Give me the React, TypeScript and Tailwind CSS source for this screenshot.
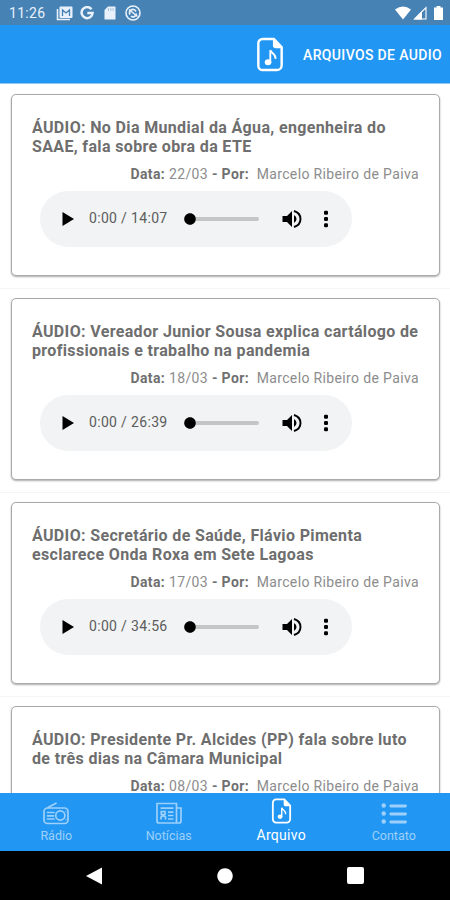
import { FaCircle } from "react-icons/fa";

type Audio = {
  title: string[];
  date: string;
  author: string;
  duration: string;
};

const audios: Audio[] = [
  {
    title: ["ÁUDIO: No Dia Mundial da Água, engenheira do", "SAAE, fala sobre obra da ETE"],
    date: "22/03",
    author: "Marcelo Ribeiro de Paiva",
    duration: "14:07",
  },
  {
    title: ["ÁUDIO: Vereador Junior Sousa explica cartálogo de", "profissionais e trabalho na pandemia"],
    date: "18/03",
    author: "Marcelo Ribeiro de Paiva",
    duration: "26:39",
  },
  {
    title: ["ÁUDIO: Secretário de Saúde, Flávio Pimenta", "esclarece Onda Roxa em Sete Lagoas"],
    date: "17/03",
    author: "Marcelo Ribeiro de Paiva",
    duration: "34:56",
  },
  {
    title: ["ÁUDIO: Presidente Pr. Alcides (PP) fala sobre luto", "de três dias na Câmara Municipal"],
    date: "08/03",
    author: "Marcelo Ribeiro de Paiva",
    duration: "",
  },
];

const MusicFileIcon = ({ className }: { className?: string }) => (
  <svg viewBox="0 0 28 36" fill="none" className={className}>
    <path
      d="M6.500 2H18l8 8.500V29a5 5 0 0 1-5 5H6.500A4.500 4.500 0 0 1 2 29.500V6.500A4.500 4.500 0 0 1 6.500 2Z"
      stroke="currentColor"
      strokeWidth="2.500"
    />
    <path d="M17 1.500 27 11.500H20a3 3 0 0 1-3-3Z" fill="currentColor" />
    <ellipse cx="12" cy="26" rx="3.400" ry="3" fill="currentColor" />
    <path d="M14.300 26V13.500c1 3.500 6 3.700 5.400 9" stroke="currentColor" strokeWidth="1.900" />
  </svg>
);

const RadioIcon = () => (
  <svg viewBox="0 0 26 23" fill="none" stroke="currentColor" strokeWidth="1.700" className="h-[23px] w-[26px]">
    <rect x="1" y="6" width="24" height="15.500" rx="3.500" />
    <path d="M5 5.500 13 1.200M4.500 10.500H11M4.500 13.800H10.500M4.500 17H11" strokeLinecap="round" />
    <circle cx="17.300" cy="13.500" r="4.600" />
    <path d="M22.500 9.500h.8M22.500 17.500h.8" />
  </svg>
);

const NewsIcon = () => (
  <svg viewBox="0 0 26 23" fill="none" stroke="currentColor" strokeWidth="1.700" className="h-[23px] w-[26px]">
    <path d="M1 1.500H20.500V21H3a2 2 0 0 1-2-2ZM20.500 6H25V19a2 2 0 0 1-2 2H19" />
    <path d="M4.500 6.200H17.500M12 10.200H17.500M12 13.500H17.500M12 17H17.500" />
    <path d="M5 17.500V15l2-1.500 2.500 1.500v2.500M5.300 9.500H9v3H5.300Z" />
  </svg>
);

const ListIcon = () => (
  <svg viewBox="0 0 26 23" fill="none" stroke="currentColor" className="h-[23px] w-[26px]">
    <path d="M9.800 4H24.500M9.800 12H24.500M9.800 20H24.500" strokeWidth="2.800" strokeLinecap="round" />
    <path d="M2.700 3.500h.01M2.700 11.500h.01M2.700 19.500h.01" strokeWidth="4.500" strokeLinecap="round" />
  </svg>
);

const StatusBar = () => (
  <div className="flex h-[25px] shrink-0 items-center bg-[#4682b4] pt-px pr-[7px] pl-[9px] text-[#e8f1fc]">
    <span className="w-[47px] text-[14px] tracking-[0.300px]">11:26</span>
    <svg viewBox="0 0 17 15" fill="none" className="h-[15px] w-[17px]">
      <path d="M1.500 3v10.500H14" stroke="currentColor" strokeWidth="1.600" />
      <rect x="3.500" y="0.500" width="13" height="11.500" rx="1" fill="currentColor" />
      <path d="M6.500 10V4l3.500 3 3.500-3v6" stroke="#4682b4" strokeWidth="1.300" />
    </svg>
    <svg viewBox="0 0 14 14" fill="none" className="ml-[7px] h-[14px] w-[14px]">
      <path d="M11.500 3.300A5.500 5.500 0 1 0 12.600 7H7.300" stroke="currentColor" strokeWidth="2.500" />
    </svg>
    <svg viewBox="0 0 12 14" fill="none" className="ml-[10px] h-[14px] w-[12px]">
      <path d="M4 .5h7.500v13H.5V4Z" fill="currentColor" />
      <path d="M4.500 2v3M6.800 2v3M9.100 2v3" stroke="#4682b4" strokeWidth="0.400" />
    </svg>
    <svg viewBox="0 0 16 16" fill="none" stroke="currentColor" className="ml-[9px] h-[16px] w-[16px]">
      <circle cx="8" cy="8" r="7" strokeWidth="1.600" />
      <path d="M5 9.500a3.600 3.600 0 0 1 .8-4.400q3-2 5.200 1.400M11.500 8.500a3.600 3.600 0 0 1-5.500 2.800" strokeWidth="1.700" />
      <path d="m4 4.500 8.500 7" strokeWidth="1.500" />
    </svg>
    <div className="ml-auto flex items-center gap-[2px] text-white">
      <svg viewBox="0 0 16 14" fill="currentColor" className="h-[14px] w-[16px]">
        <path d="M0 3.500Q8-2.500 16 3.500L8 13.500Z" />
      </svg>
      <svg viewBox="0 0 14 14" fill="none" className="h-[14px] w-[14px]">
        <path d="M13 1.500V13H1.500Z" stroke="currentColor" strokeWidth="1.100" />
        <path d="M9 5v8.500H1Z" fill="currentColor" />
      </svg>
      <svg viewBox="0 0 9 14" fill="currentColor" className="ml-[5px] h-[14px] w-[9px]">
        <path d="M2.500 0h4v1.500H9V14H0V1.500h2.500Z" />
      </svg>
    </div>
  </div>
);

const Player = ({ duration }: { duration: string }) => (
  <div className="mt-2 ml-[28px] flex h-14 w-[312px] items-center rounded-full bg-[#f1f3f4] pl-[22px] text-black">
    <svg viewBox="0 0 12 14" fill="currentColor" className="h-[14px] w-[12px]">
      <path d="M.5 0v14L12 7Z" />
    </svg>
    <span className="ml-[15px] w-[95px] text-[14px] tracking-[0.330px] whitespace-nowrap text-[#5c5c5c]">
      0:00 / {duration}
    </span>
    <FaCircle className="h-3 w-3 shrink-0" />
    <div className="h-1 w-[63px] rounded-r-full bg-[#c4c5c5]" />
    <svg viewBox="0 0 20 18" fill="none" className="ml-[23px] h-[18px] w-[20px]">
      <path d="M.5 6v6H5l5 5V1L5 6Z" fill="currentColor" />
      <path d="M12 5v8q2.500-1.500 2.500-4T12 5Z" fill="currentColor" />
      <path d="M12 1q6.500 2 6.500 8T12 17" stroke="currentColor" strokeWidth="1.900" />
    </svg>
    <svg viewBox="0 0 4 18" fill="currentColor" className="ml-[22px] h-[18px] w-[4px]">
      <rect y="0.700" width="4" height="4" rx="1.300" />
      <rect y="7" width="4" height="4" rx="1.300" />
      <rect y="13.300" width="4" height="4" rx="1.300" />
    </svg>
  </div>
);

const AudioCard = ({ audio }: { audio: Audio }) => (
  <li className="h-[204px] shrink-0 border-b border-[#f5f5f7] pt-[9px] pr-[10px] pl-[11px]">
    <article className="h-[182px] rounded-[5px] border border-[#aaa] bg-white shadow-[0_1px_2px_#00000055]">
      <h2 className="pt-[22.500px] pl-[20px] text-[16px] leading-[19.500px] font-bold tracking-[0.350px] whitespace-nowrap text-[#6e6e6e]">
        {audio.title.map((line) => (
          <span key={line} className="block">
            {line}
          </span>
        ))}
      </h2>
      <p className="mt-[8px] pr-[20px] text-right text-[14px] leading-[18px] tracking-[0.360px] text-[#8c8c8c]">
        <b className="text-[#707070]">Data:</b> {audio.date} <b className="text-[#707070]">- Por:</b>
        &nbsp; {audio.author}
      </p>
      {audio.duration && <Player duration={audio.duration} />}
    </article>
  </li>
);

const tabs = [
  { label: "Rádio", icon: <RadioIcon /> },
  { label: "Notícias", icon: <NewsIcon /> },
  { label: "Arquivo", icon: <MusicFileIcon className="h-[26px] w-[21px]" />, active: true },
  { label: "Contato", icon: <ListIcon /> },
];

const TabBar = () => (
  <nav className="grid h-[58px] shrink-0 grid-cols-4 bg-[#2296f3]">
    {tabs.map(({ label, icon, active }) =>
      active ? (
        <div key={label} className="flex flex-col items-center pt-[5px] text-white">
          {icon}
          <span className="mt-[2px] text-[14px] leading-[18px] tracking-[0.300px]">{label}</span>
        </div>
      ) : (
        <div key={label} className="flex flex-col items-center pt-[9px] text-[#9dd0fa]">
          {icon}
          <span className="mt-[2px] text-[12.500px] leading-[18px]">{label}</span>
        </div>
      ),
    )}
  </nav>
);

const App = () => {
  return (
    <div className="flex h-[900px] w-[450px] flex-col overflow-hidden bg-white font-[Roboto,sans-serif]">
      <StatusBar />
      <header className="flex h-[59px] shrink-0 items-center justify-end border-b border-[#8fc9f8] bg-[#2296f3] pr-[8px] text-white">
        <MusicFileIcon className="mr-[19px] h-[35px] w-[28px]" />
        <h1 className="pt-[2px] text-[14px] font-medium tracking-[0.350px] whitespace-nowrap">ARQUIVOS DE AUDIO</h1>
      </header>
      <ul className="flex min-h-0 flex-1 flex-col overflow-hidden pt-px">
        {audios.map((audio) => (
          <AudioCard key={audio.date} audio={audio} />
        ))}
      </ul>
      <TabBar />
      <div className="flex h-[49px] shrink-0 items-center bg-black pl-[86px] text-white">
        <svg viewBox="0 0 16 18" fill="currentColor" className="h-[18px] w-[16px]">
          <path d="M16 .5v17L0 9Z" />
        </svg>
        <FaCircle className="ml-[115px] h-4 w-4" />
        <div className="ml-[114px] h-[17px] w-[17px] rounded-[2px] bg-white" />
      </div>
    </div>
  );
};

export default App;
